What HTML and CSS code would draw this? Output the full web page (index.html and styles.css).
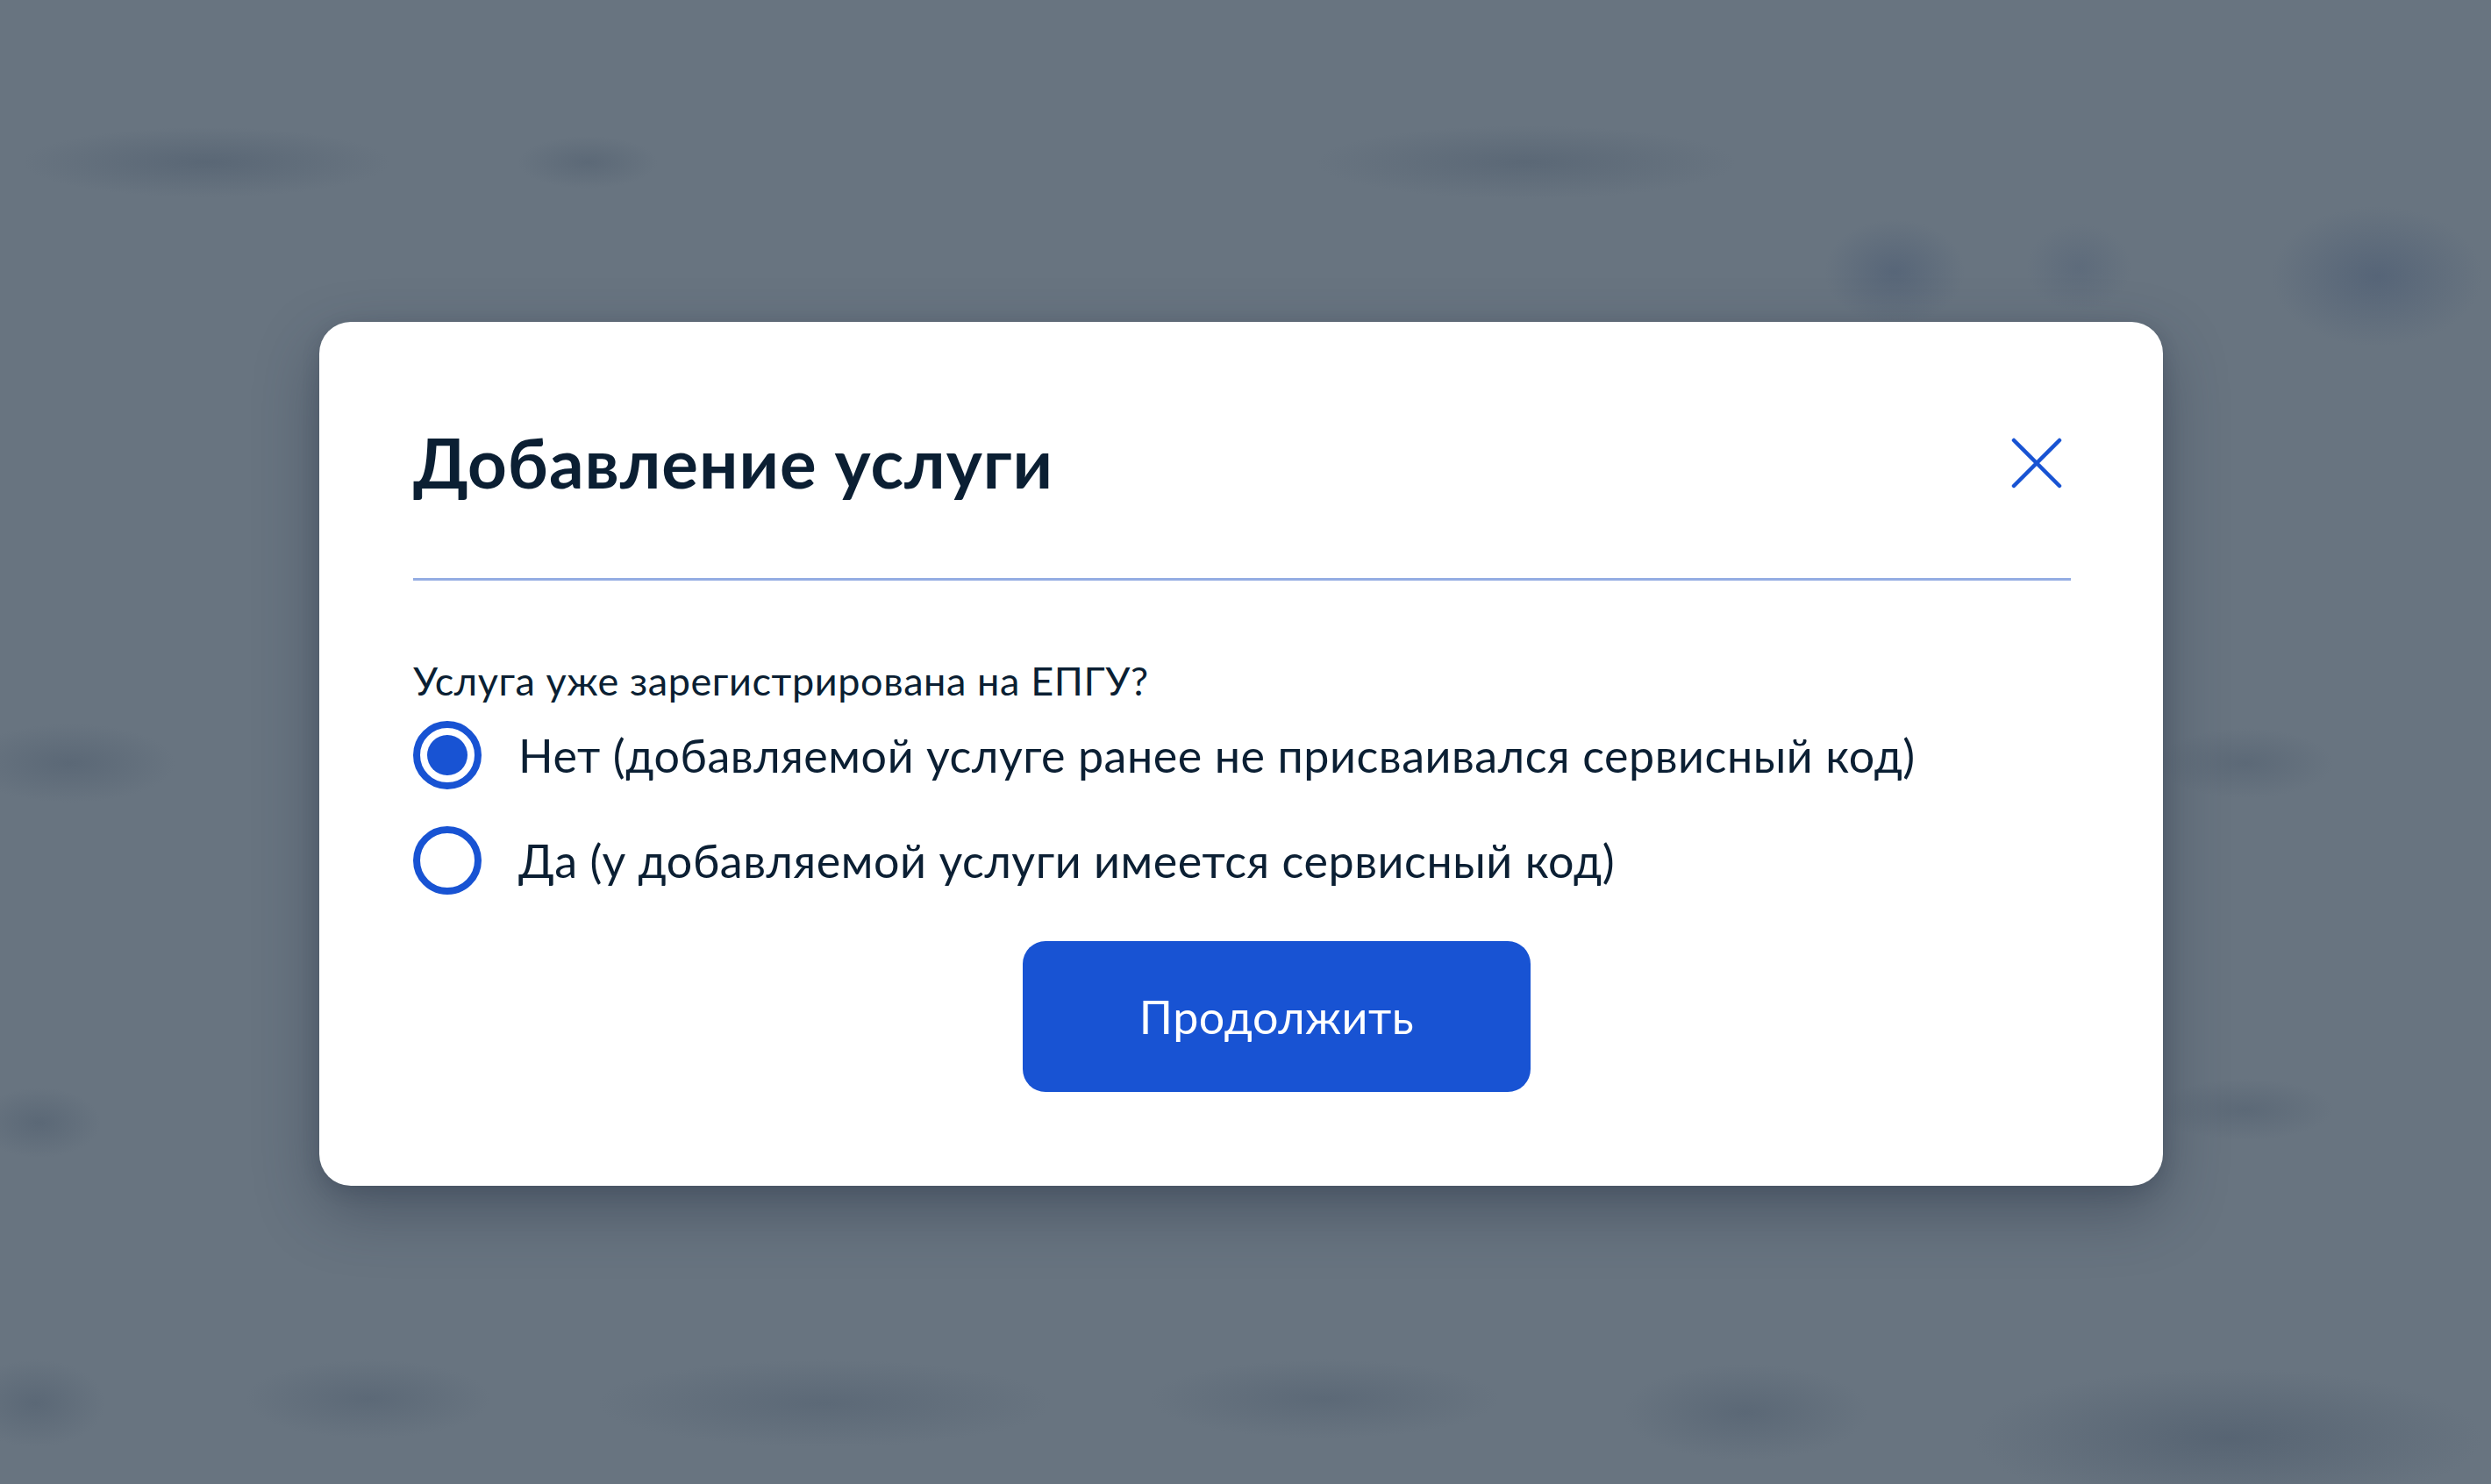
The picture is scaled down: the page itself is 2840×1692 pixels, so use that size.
FILE: index.html
```html
<!DOCTYPE html>
<html lang="ru">
<head>
<meta charset="utf-8">
<title>Добавление услуги</title>
<link rel="stylesheet" href="styles.css">
</head>
<body>
<div class="overlay">
  <div class="modal" role="dialog" aria-labelledby="modal-title">
    <div class="modal-header">
      <h1 class="modal-title" id="modal-title">Добавление услуги</h1>
      <button class="close-btn" type="button" aria-label="Закрыть">
        <svg width="60" height="60" viewBox="0 0 60 60" aria-hidden="true">
          <path d="M4 4 L56 56 M56 4 L4 56" fill="none" stroke="#1853d3" stroke-width="4.5" stroke-linecap="round"/>
        </svg>
      </button>
    </div>
    <div class="divider"></div>
    <p class="question">Услуга уже зарегистрирована на ЕПГУ?</p>
    <div class="radio-group">
      <label class="radio-row">
        <span class="radio checked"><span class="radio-dot"></span></span>
        <span class="radio-label">Нет (добавляемой услуге ранее не присваивался сервисный код)</span>
      </label>
      <label class="radio-row">
        <span class="radio"></span>
        <span class="radio-label">Да (у добавляемой услуги имеется сервисный код)</span>
      </label>
    </div>
    <div class="actions">
      <button class="primary-btn" type="button">Продолжить</button>
    </div>
  </div>
</div>
</body>
</html>
```

FILE: styles.css
```css
* {
  box-sizing: border-box;
}

html, body {
  margin: 0;
  padding: 0;
  width: 100%;
  height: 100%;
}

body {
  font-family: "Lato", "Noto Sans", "Liberation Sans", sans-serif;
  color: #0b1f33;
  overflow: hidden;
  background-color: #687480;
  background-image:
    radial-gradient(ellipse 210px 40px at 235px 185px, rgba(80, 94, 110, 0.6), rgba(80, 94, 110, 0) 100%),
    radial-gradient(ellipse 80px 30px at 670px 185px, rgba(80, 94, 110, 0.5), rgba(80, 94, 110, 0) 100%),
    radial-gradient(ellipse 240px 42px at 1740px 185px, rgba(80, 94, 110, 0.55), rgba(80, 94, 110, 0) 100%),
    radial-gradient(ellipse 80px 60px at 2160px 310px, rgba(78, 94, 116, 0.65), rgba(78, 94, 116, 0) 100%),
    radial-gradient(ellipse 60px 50px at 2370px 305px, rgba(78, 94, 116, 0.4), rgba(78, 94, 116, 0) 100%),
    radial-gradient(ellipse 120px 80px at 2710px 315px, rgba(78, 94, 116, 0.7), rgba(78, 94, 116, 0) 100%),
    radial-gradient(ellipse 120px 45px at 80px 870px, rgba(80, 94, 110, 0.55), rgba(80, 94, 110, 0) 100%),
    radial-gradient(ellipse 100px 40px at 2560px 870px, rgba(80, 94, 110, 0.5), rgba(80, 94, 110, 0) 100%),
    radial-gradient(ellipse 70px 40px at 45px 1280px, rgba(80, 94, 110, 0.55), rgba(80, 94, 110, 0) 100%),
    radial-gradient(ellipse 100px 35px at 2560px 1265px, rgba(80, 94, 110, 0.5), rgba(80, 94, 110, 0) 100%),
    radial-gradient(ellipse 80px 50px at 40px 1600px, rgba(80, 94, 110, 0.55), rgba(80, 94, 110, 0) 100%),
    radial-gradient(ellipse 140px 45px at 420px 1595px, rgba(80, 94, 110, 0.5), rgba(80, 94, 110, 0) 100%),
    radial-gradient(ellipse 260px 50px at 940px 1600px, rgba(80, 94, 110, 0.5), rgba(80, 94, 110, 0) 100%),
    radial-gradient(ellipse 200px 45px at 1510px 1595px, rgba(80, 94, 110, 0.5), rgba(80, 94, 110, 0) 100%),
    radial-gradient(ellipse 140px 55px at 1990px 1610px, rgba(80, 94, 110, 0.55), rgba(80, 94, 110, 0) 100%),
    radial-gradient(ellipse 290px 80px at 2540px 1640px, rgba(78, 92, 108, 0.65), rgba(78, 92, 108, 0) 100%);
}

.overlay {
  width: 100%;
  height: 100%;
  padding-top: 367px;
  padding-left: 364px;
}

.modal {
  width: 2102px;
  background: #ffffff;
  border-radius: 36px;
  padding: 114px 105px 107px 107px;
  box-shadow: 0 28px 70px rgba(40, 52, 68, 0.45), 0 6px 20px rgba(40, 52, 68, 0.2);
}

.modal-header {
  display: flex;
  align-items: center;
  justify-content: space-between;
  height: 93px;
}

.modal-title {
  margin: 0;
  font-size: 78px;
  line-height: 93px;
  font-weight: 700;
  color: #0b1f33;
  letter-spacing: 1px;
}

.close-btn {
  width: 60px;
  height: 60px;
  padding: 0;
  margin-right: 9px;
  border: none;
  background: transparent;
  display: flex;
  align-items: center;
  justify-content: center;
  cursor: pointer;
}

.close-btn svg {
  display: block;
}

.divider {
  margin-top: 85px;
  height: 3px;
  background: #94ade3;
}

.question {
  margin: 88px 0 0 0;
  font-size: 45px;
  line-height: 53px;
  font-weight: 400;
  letter-spacing: 0.6px;
  color: #0b1f33;
}

.radio-group {
  margin-top: 19px;
  display: flex;
  flex-direction: column;
  gap: 42px;
}

.radio-row {
  display: flex;
  align-items: center;
  gap: 42px;
  height: 78px;
  cursor: pointer;
}

.radio {
  flex: 0 0 78px;
  width: 78px;
  height: 78px;
  border: 8px solid #1853d3;
  border-radius: 50%;
  display: flex;
  align-items: center;
  justify-content: center;
}

.radio-dot {
  width: 46px;
  height: 46px;
  border-radius: 50%;
  background: #1853d3;
}

.radio-label {
  font-size: 52px;
  line-height: 62px;
  font-weight: 400;
  letter-spacing: 0.55px;
  color: #0b1f33;
}

.actions {
  margin-top: 53px;
  display: flex;
}

.primary-btn {
  margin-left: 695px;
  width: 579px;
  height: 172px;
  border: none;
  border-radius: 26px;
  background: #1853d3;
  color: #ffffff;
  font-family: "Lato", "Noto Sans", "Liberation Sans", sans-serif;
  font-size: 52px;
  font-weight: 400;
  letter-spacing: 0.5px;
  cursor: pointer;
}
```
